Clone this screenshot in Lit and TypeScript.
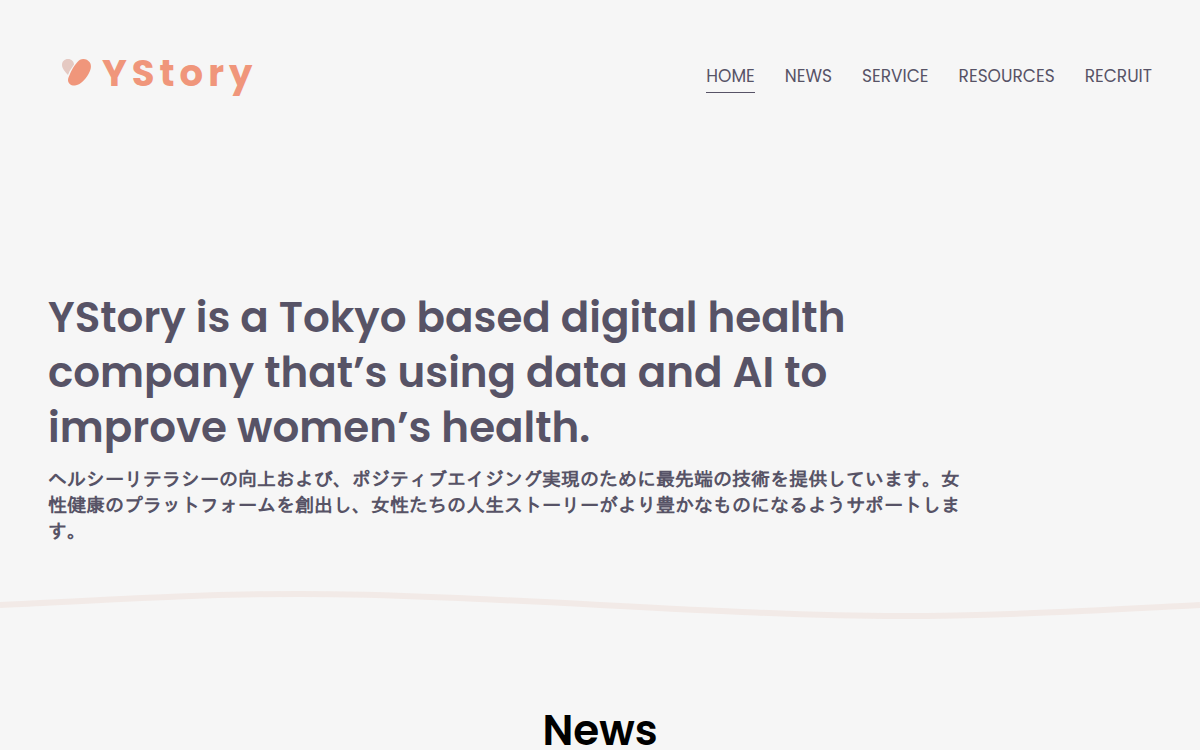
import { LitElement, html, css } from "lit";
import { customElement, state } from "lit/decorators.js";

const LINKS = ["HOME", "NEWS", "SERVICE", "RESOURCES", "RECRUIT"];

@customElement("app-root")
export class AppRoot extends LitElement {
  static styles = css`
    :host {
      display: block;
      min-height: 100vh;
      background: #f6f6f6;
      color: #575366;
      font-family: Poppins, Inter, "Noto Sans CJK JP", sans-serif;
    }
    .header {
      display: flex;
      justify-content: space-between;
      align-items: flex-end;
      padding: 46px 48px 0;
    }
    .logo {
      display: flex;
      align-items: center;
      gap: 10px;
      padding-left: 13px;
      color: #f0967b;
      font-size: 37px;
      line-height: 54px;
      font-weight: 700;
      letter-spacing: 5px;
      text-decoration: none;
    }
    .mark {
      display: block;
      width: 31px;
      height: 30px;
    }
    .nav {
      display: flex;
      gap: 30px;
      padding-bottom: 7px;
    }
    .link {
      color: inherit;
      font-size: 17px;
      line-height: 26px;
      padding: 4px 0 3px;
      border-bottom: 1px solid transparent;
      text-decoration: none;
    }
    .current {
      border-bottom-color: #575366;
    }
    .hero {
      padding: 190px 48px 0;
    }
    .copy {
      max-width: 920px;
    }
    .title {
      margin: 0;
      font-size: 42px;
      line-height: 55px;
      font-weight: 600;
    }
    .lead {
      margin: 11px 0 0;
      font-family: IPAGothic, "Noto Sans CJK JP", sans-serif;
      font-size: 19px;
      line-height: 26px;
      font-weight: 700;
    }
    .wave {
      display: block;
      width: 100%;
      height: 32px;
      margin-top: 44px;
    }
    .news {
      margin: 83px 0 0;
      padding: 0 48px;
      color: #000;
      text-align: center;
      font-size: 42px;
      line-height: 55px;
      font-weight: 600;
    }
  `;

  @state() private current = "HOME";

  render() {
    return html`
      <header class="header">
        <a class="logo" href="#home">
          <svg class="mark" viewBox="0 0 31 30" aria-hidden="true">
            <path
              d="M7 17C4 14 1 10 1 7C1 3.500 3.500 1 7 1C10.500 1 13 3.500 13 6.500C12 8.500 8.500 12 7 17Z"
              fill="#e5c9c2"
            />
            <path
              d="M9 16C11 11 15.500 4 19 1.800C22 0 26.500 1 28.700 4.200C31 7.500 29.800 12 27.500 16C24.500 21.500 19.500 26.700 14 27.500C10.500 28 7 25.700 7 22C7 20 8.200 18 9 16Z"
              fill="#f0967b"
            />
          </svg>
          <span>YStory</span>
        </a>
        <nav class="nav">
          ${LINKS.map(
            (name) => html`<a
              class="link ${name === this.current ? "current" : ""}"
              href="#${name.toLowerCase()}"
              @click=${() => (this.current = name)}
              >${name}</a
            >`
          )}
        </nav>
      </header>
      <main>
        <section class="hero">
          <div class="copy">
            <h1 class="title">
              YStory is a Tokyo based digital health company that’s using data
              and AI to improve women’s health.
            </h1>
            <p class="lead" lang="ja">ヘルシーリテラシーの向上および、ポジティブエイジング実現のために最先端の技術を提供しています。女性健康のプラットフォームを創出し、女性たちの人生ストーリーがより豊かなものになるようサポートします。</p>
          </div>
        </section>
        <svg class="wave" viewBox="0 0 1200 32" preserveAspectRatio="none" aria-hidden="true">
          <path
            d="M0 17C120 11 200 6 300 6C480 6 720 28 900 28C1000 28 1100 22 1200 17"
            fill="none"
            stroke="#f2eae7"
            stroke-width="6"
          />
        </svg>
        <h2 class="news">News</h2>
      </main>
    `;
  }
}
